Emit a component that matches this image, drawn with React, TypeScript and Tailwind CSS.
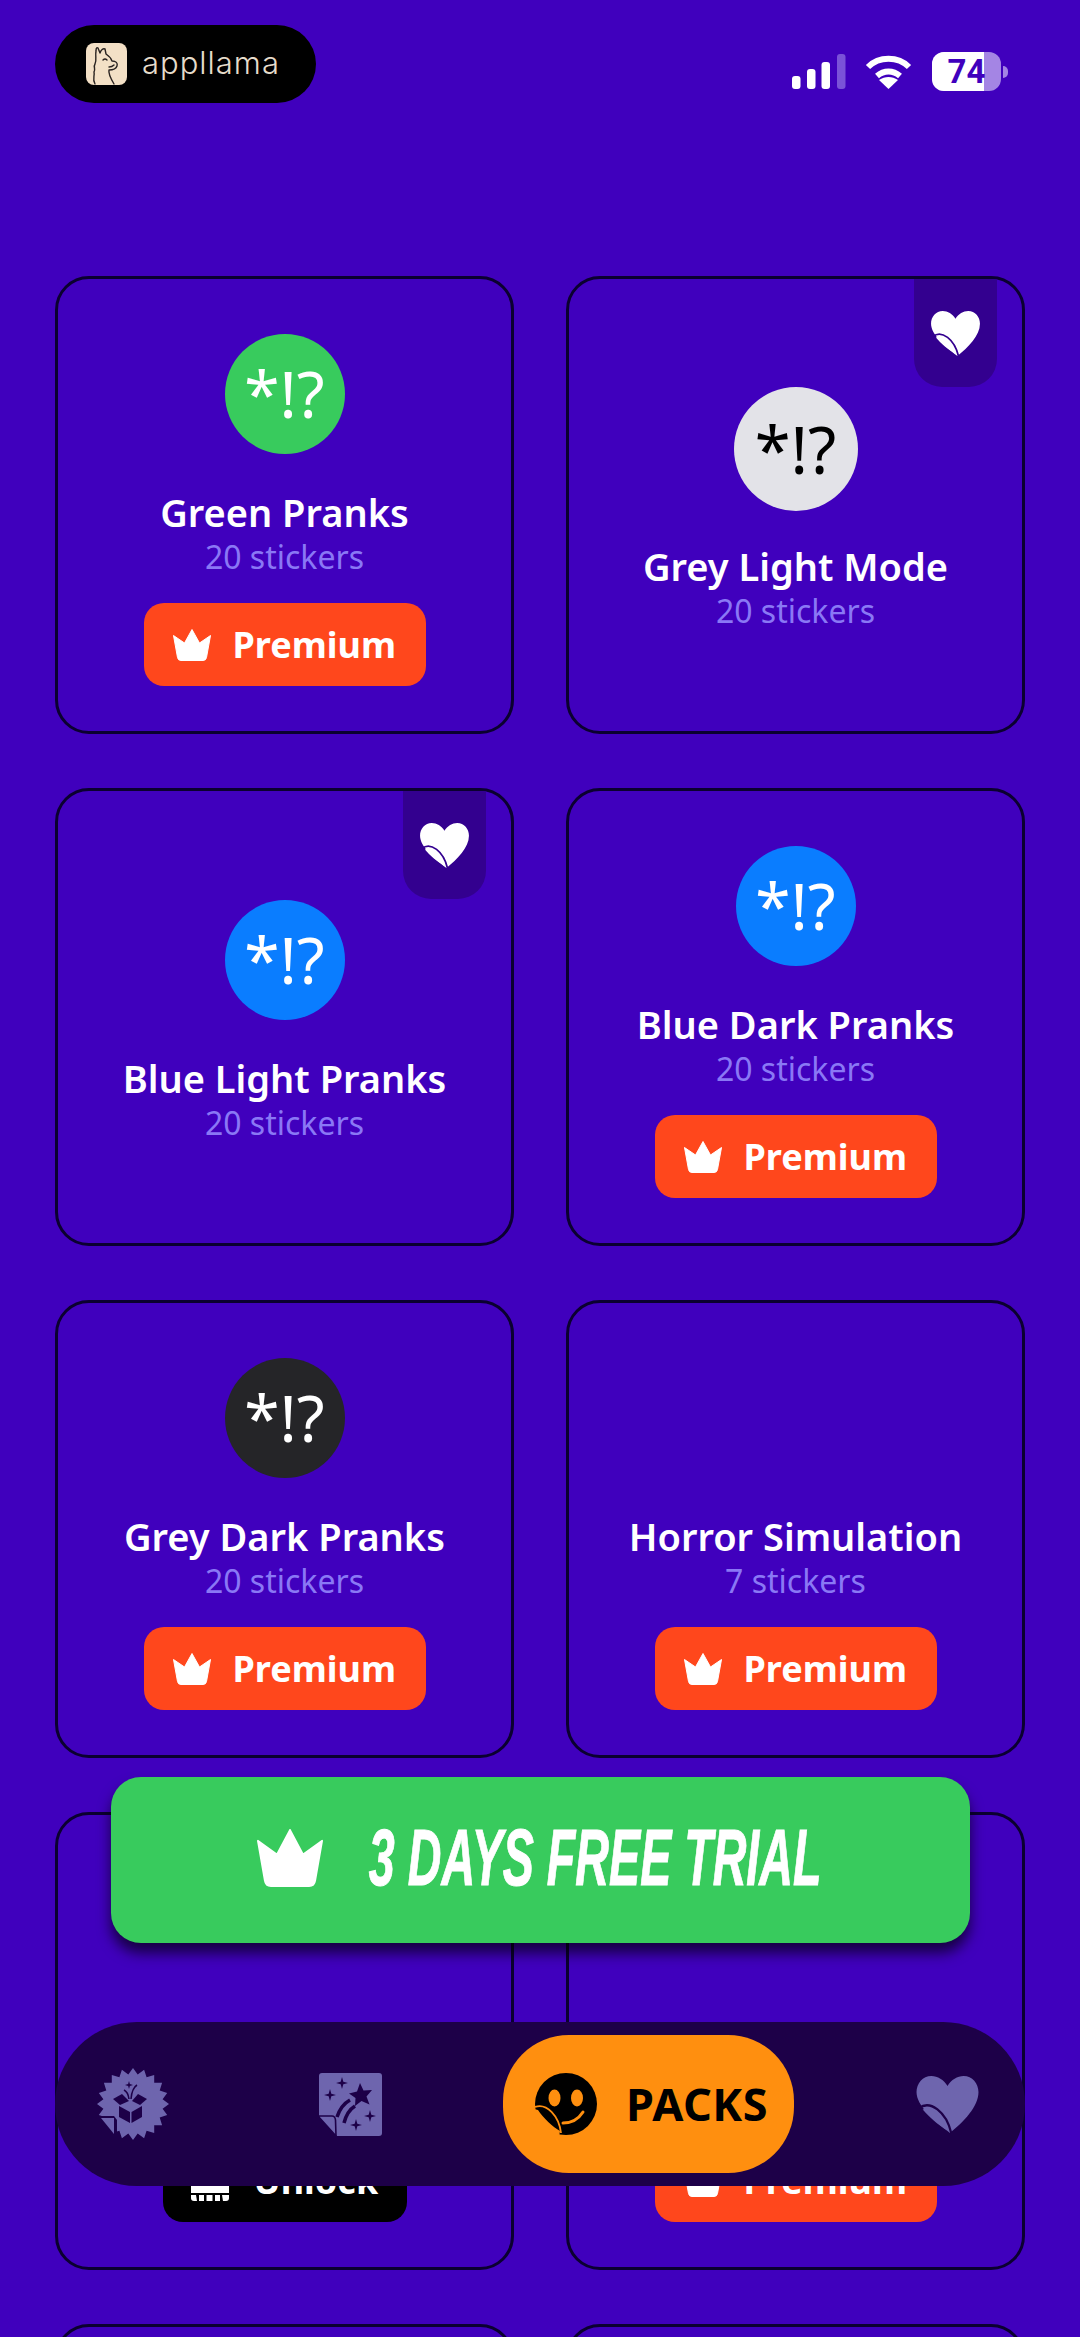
const packs = [
  { title: "Green Pranks", count: "20 stickers", circle: "bg-[#38cb5d] text-white", action: "premium" },
  { title: "Grey Light Mode", count: "20 stickers", circle: "bg-[#e3e3e8] text-black", big: true, liked: true },
  { title: "Blue Light Pranks", count: "20 stickers", circle: "bg-[#0a7dff] text-white", liked: true },
  { title: "Blue Dark Pranks", count: "20 stickers", circle: "bg-[#0a7dff] text-white", action: "premium" },
  { title: "Grey Dark Pranks", count: "20 stickers", circle: "bg-[#252528] text-white", action: "premium" },
  { title: "Horror Simulation", count: "7 stickers", action: "premium" },
  { title: "", count: "", action: "unlock" },
  { title: "", count: "", action: "premium" },
  { title: "", count: "" },
  { title: "", count: "" },
]

function Crown({ className }: { className: string }) {
  return (
    <svg viewBox="0 0 38 32" className={className} fill="currentColor" stroke="currentColor" strokeLinejoin="round" preserveAspectRatio="none">
      <path d="M19 0.5 L26.5 14 L37.5 6.5 L33.5 28.5 Q33 31.5 30 31.5 H8 Q5 31.5 4.5 28.5 L0.5 6.5 L11.5 14 Z" />
    </svg>
  )
}

function PeelHeart({ className, line }: { className: string; line: string }) {
  return (
    <svg viewBox="0 0 50 46" className={className}>
      <path
        fill="currentColor"
        d="M25 8 C22 3 17 0 12 0 C5 0 0 6 0 13 C0 24 14 36 27 46 C38 37 50 25 50 13 C50 6 45 0 38 0 C33 0 28 3 25 8 Z"
      />
      <path fill={line} d="M2 24 C5 31 16 40 27 47 L2 47 Z" />
      <path fill="currentColor" d="M5 27 C12 24 21 33 25 44 C17 39 10 33 5 27 Z" />
      <path fill="none" stroke={line} strokeWidth="1.8" d="M2 26 C11 19 24 29 28 46" />
    </svg>
  )
}

function Sparkle({ x, y, r }: { x: number; y: number; r: number }) {
  const k = r * 0.22
  return (
    <path
      d={`M${x} ${y - r} L${x + k} ${y - k} L${x + r} ${y} L${x + k} ${y + k} L${x} ${y + r} L${x - k} ${y + k} L${x - r} ${y} L${x - k} ${y - k} Z`}
    />
  )
}

function badgePoints() {
  const pts: string[] = []
  for (let i = 0; i < 40; i++) {
    const r = i % 2 === 0 ? 36 : 30
    const a = (i * Math.PI) / 20 - Math.PI / 2
    pts.push(`${(36 + r * Math.cos(a)).toFixed(1)},${(36 + r * Math.sin(a)).toFixed(1)}`)
  }
  return pts.join(" ")
}

function BoxBadge() {
  return (
    <svg viewBox="0 0 72 72" className="w-[72px] h-[72px] shrink-0">
      <polygon points={badgePoints()} fill="#6e65ae" />
      <path fill="#1d0048" d="M0 48 H17 L20 52 V72 H0 Z" />
      <path fill="#6e65ae" d="M4 50 H17 V66 Z" />
      <g fill="#1d0048">
        <path d="M22 38 L33 44 V55 L22 49 Z" />
        <path d="M45 38 L34.5 44 V55 L45 49 Z" />
        <path d="M16 31 L25 26 L32 33 L23 37 Z" />
        <path d="M50 31 L41 26 L35 33 L43 37 Z" />
        <Sparkle x={32} y={17} r={4} />
      </g>
      <path fill="none" stroke="#1d0048" strokeWidth="1.5" d="M32 31 Q31 24 27 22 M34 31 Q35 20 40 17" />
    </svg>
  )
}

function StickerStar() {
  return (
    <svg viewBox="0 0 63 63" className="w-[63px] h-[63px] shrink-0">
      <path fill="#6e65ae" d="M3 0 H60 Q63 0 63 3 V60 Q63 63 60 63 H18 L0 44 V3 Q0 0 3 0 Z" />
      <path fill="#6e65ae" stroke="#1d0048" strokeWidth="1.6" d="M-1 43 H13 Q16 43 16.5 47 L17 63 Z" />
      <g fill="#1d0048">
        <Sparkle x={23} y={10} r={6} />
        <Sparkle x={11} y={22} r={6} />
        <Sparkle x={51} y={43} r={6} />
        <Sparkle x={37} y={52} r={6} />
        <path d="M41 10 L44.5 17.5 L53 17 L47.5 23.5 L50.5 31.5 L42.5 28 L36 33 L36.5 25 L30 20.5 L38 18.5 Z" />
      </g>
      <path fill="none" stroke="#1d0048" strokeWidth="3.5" d="M31 27 Q22 32 18 44 M36 33 Q28 38 25 50" />
    </svg>
  )
}

function PeelFace() {
  return (
    <svg viewBox="0 0 62 63" className="w-[62px] h-[63px] shrink-0">
      <circle cx="31" cy="31" r="31" fill="#000" />
      <ellipse cx="19.5" cy="25" rx="6" ry="8.5" fill="#ff8f0f" />
      <ellipse cx="42" cy="25" rx="6" ry="8.5" fill="#ff8f0f" />
      <path fill="none" stroke="#ff8f0f" strokeWidth="3" strokeLinecap="round" d="M28 50 Q41 50 48 39" />
      <path fill="#ff8f0f" d="M-1 36 L-1 64 L24 64 L25 58 C18 54 8 45 3 37 Z" />
      <path fill="#000" d="M4 36 C13 34 22 44 25 56 C16 51 9 44 4 36 Z" />
      <path fill="none" stroke="#ff8f0f" strokeWidth="1.8" d="M0 34 C12 30 24 43 26 60" />
    </svg>
  )
}

function LlamaLogo() {
  return (
    <div className="w-[41px] h-[42px] rounded-[8px] bg-[#f3e0c6] shrink-0">
      <svg viewBox="0 0 41 42" className="w-full h-full" fill="none" stroke="#2a2320" strokeWidth="1.4" strokeLinecap="round" strokeLinejoin="round">
        <path d="M9 41 C6 36 9 33 8 29 C10 26 7 24 9 21 C11 17 9 13 10 8 C10 5 11 4 12 5 L14 10 C15 7 17 5 19 6 L20 11 C23 13 25 15 26 18 C30 18 32 20 31 23 C30 26 26 27 23 27 C22 31 25 36 28 41" />
        <path d="M17 17 Q19 15 21 17 M23 24 Q26 24 28 22" />
      </svg>
    </div>
  )
}

function StatusIcons() {
  return (
    <div className="flex items-start mt-[27px]">
      <svg viewBox="0 0 54 35" className="w-[54px] h-[35px] mt-[2px]" fill="#fff">
        <rect x="0" y="22" width="8.5" height="13" rx="3" />
        <rect x="15" y="15" width="8.5" height="20" rx="3" />
        <rect x="29.5" y="8" width="8.5" height="27" rx="3" />
        <rect x="45" y="0" width="8.5" height="35" rx="3" fill="#7a52d8" />
      </svg>
      <svg viewBox="0 0 47 34" className="w-[47px] h-[34px] ml-[19px] mt-[3px]" fill="none" stroke="#fff" strokeWidth="6">
        <path d="M3 12 C14 1 33 1 44 12" />
        <path d="M12 21 C19 15 28 15 35 21" />
        <path fill="#fff" stroke="none" d="M23.5 34 L14 25 C20 21 27 21 33 25 Z" />
      </svg>
      <div className="flex items-center ml-[20px]">
        <div className="relative w-[69px] h-[39px] rounded-[12px] overflow-hidden bg-[#a485e4]">
          <div className="w-[52px] h-full bg-white" />
          <div className="absolute inset-0 flex items-center justify-center text-[#4000bd] text-[33px] leading-none font-bold font-['Roboto',sans-serif]">
            74
          </div>
        </div>
        <div className="w-[5px] h-[12px] ml-[2px] rounded-r-full bg-[#a485e4]" />
      </div>
    </div>
  )
}

function UnlockIcon() {
  return (
    <svg viewBox="0 0 38 34" className="w-[38px] h-[34px] mt-[7px]" fill="#fff">
      <path d="M3 0 H35 Q38 0 38 3 V26 H0 V3 Q0 0 3 0 Z" />
      <path d="M0 28 H5 L6 34 H3 Q0 34 0 31 Z" />
      <rect x="8" y="28" width="5" height="6" />
      <rect x="15.5" y="28" width="6" height="6" />
      <rect x="24" y="28" width="5" height="6" />
      <path d="M31 28 H38 V31 Q38 34 35 34 H32 Z" />
    </svg>
  )
}

function PackCard({ pack }: { pack: (typeof packs)[number] }) {
  return (
    <div className="relative h-[458px] flex flex-col items-center justify-center pt-[10px] rounded-[34px] border-[3px] border-[#0b0030] overflow-hidden">
      {pack.liked && (
        <div className="absolute top-0 right-[25px] w-[83px] h-[108px] rounded-b-[28px] bg-[#33008f] flex justify-center pt-[32px]">
          <PeelHeart className="w-[49px] h-[45px] text-white" line="#33008f" />
        </div>
      )}
      <div
        className={`rounded-full flex items-center justify-center leading-none ${
          pack.big ? "w-[124px] h-[124px] text-[65px]" : "w-[120px] h-[120px] text-[64px]"
        } ${pack.circle ?? ""}`}
      >
        {pack.circle ? "*!?" : ""}
      </div>
      <div className={`h-[44px] leading-[42px] text-[38px] font-semibold text-white whitespace-nowrap ${pack.big ? "mt-[34px]" : "mt-[37px]"}`}>
        {pack.title}
      </div>
      <div className="h-[44px] leading-[44px] text-[32px] text-[#8a78f5] whitespace-nowrap">{pack.count}</div>
      {pack.action === "premium" && (
        <div className="mt-[24px] w-[282px] h-[83px] rounded-[20px] bg-[#ff471c] text-white flex items-center pl-[29px] gap-[22px]">
          <Crown className="w-[38px] h-[32px]" />
          <span className="text-[36px] font-bold">Premium</span>
        </div>
      )}
      {pack.action === "unlock" && (
        <div className="mt-[24px] w-[244px] h-[83px] rounded-[20px] bg-black text-white flex items-center pl-[28px] gap-[25px]">
          <UnlockIcon />
          <span className="text-[36px] font-bold">Unlock</span>
        </div>
      )}
    </div>
  )
}

export default function App() {
  return (
    <div className="relative h-[2337px] overflow-hidden bg-[#4000bd] font-['Noto_Sans',sans-serif]">
      <header className="h-[276px] flex items-start justify-between pl-[55px] pr-[72px] pt-[25px]">
        <div className="w-[261px] h-[78px] rounded-full bg-black flex items-center pl-[31px] gap-[15px]">
          <LlamaLogo />
          <span className="text-[#e6dccb] text-[31px] leading-none font-light tracking-[1px] pb-[3px] font-['Inter',sans-serif]">
            appllama
          </span>
        </div>
        <StatusIcons />
      </header>

      <div className="grid grid-cols-2 gap-x-[52px] gap-y-[54px] px-[55px]">
        {packs.map((pack, i) => (
          <PackCard key={i} pack={pack} />
        ))}
      </div>

      {/* floating trial button */}
      <div className="absolute left-[111px] top-[1777px] w-[859px] h-[166px] rounded-[30px] bg-[#38cb5d] shadow-[0_10px_14px_rgba(0,0,0,0.65)] flex items-center pl-[146px] gap-[48px] text-white">
        <Crown className="w-[66px] h-[58px] -mt-[4px]" />
        <div className="w-[449px] flex justify-center -mt-[4px]">
          <span className="whitespace-nowrap italic font-bold text-[80px] leading-none scale-x-[0.583] [-webkit-text-stroke:1px_white] font-['Liberation_Sans',sans-serif]">
            3 DAYS FREE TRIAL
          </span>
        </div>
      </div>

      {/* bottom tab bar */}
      <nav className="absolute left-[55px] top-[2022px] w-[970px] h-[164px] rounded-full bg-[#1d0048] flex items-center pl-[42px]">
        <BoxBadge />
        <div className="ml-[150px]">
          <StickerStar />
        </div>
        <div className="ml-[121px] w-[291px] h-[138px] rounded-[66px] bg-[#ff8f0f] flex items-center pl-[32px] gap-[29px]">
          <PeelFace />
          <span className="text-[45px] font-bold text-black tracking-[0.5px]">PACKS</span>
        </div>
        <PeelHeart className="ml-[122px] w-[63px] h-[57px] text-[#6e65ae]" line="#1d0048" />
      </nav>
    </div>
  )
}
